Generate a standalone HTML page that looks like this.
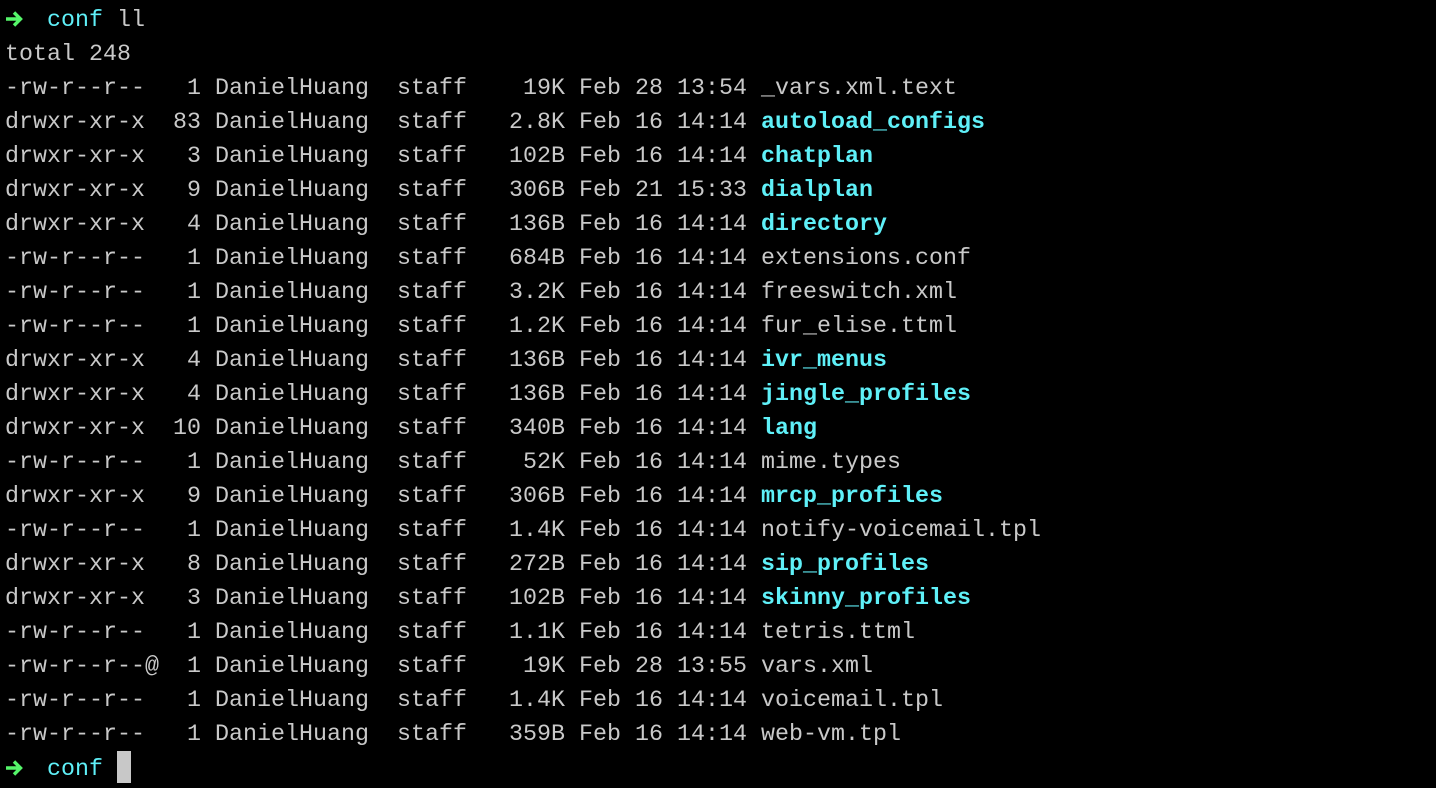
<!DOCTYPE html>
<html><head><meta charset="utf-8"><style>
html,body{margin:0;background:#000;width:1436px;height:788px;overflow:hidden}
pre{margin:0;position:absolute;left:5px;top:3px;font-family:"Liberation Mono",monospace;font-size:23.3px;line-height:34px;color:#c9c9c9;letter-spacing:0.02px}
.c{color:#5ff0f8}
.d{color:#5ff0f8;font-weight:bold}
.cur{display:inline-block;width:14px;height:32px;background:#c8c8c8;vertical-align:-8px}
.ar{display:inline-block;width:18px;height:20px;vertical-align:-3px;margin-right:-4px}
</style></head><body><pre><svg class="ar" viewBox="0 0 18 20"><path d="M1 10H15M9 3.5L15.5 10L9 16.5" stroke="#55f56a" stroke-width="3.4" fill="none"/></svg>  <span class="c">conf</span> ll
total 248
-rw-r--r--   1 DanielHuang  staff    19K Feb 28 13:54 _vars.xml.text
drwxr-xr-x  83 DanielHuang  staff   2.8K Feb 16 14:14 <span class="d">autoload_configs</span>
drwxr-xr-x   3 DanielHuang  staff   102B Feb 16 14:14 <span class="d">chatplan</span>
drwxr-xr-x   9 DanielHuang  staff   306B Feb 21 15:33 <span class="d">dialplan</span>
drwxr-xr-x   4 DanielHuang  staff   136B Feb 16 14:14 <span class="d">directory</span>
-rw-r--r--   1 DanielHuang  staff   684B Feb 16 14:14 extensions.conf
-rw-r--r--   1 DanielHuang  staff   3.2K Feb 16 14:14 freeswitch.xml
-rw-r--r--   1 DanielHuang  staff   1.2K Feb 16 14:14 fur_elise.ttml
drwxr-xr-x   4 DanielHuang  staff   136B Feb 16 14:14 <span class="d">ivr_menus</span>
drwxr-xr-x   4 DanielHuang  staff   136B Feb 16 14:14 <span class="d">jingle_profiles</span>
drwxr-xr-x  10 DanielHuang  staff   340B Feb 16 14:14 <span class="d">lang</span>
-rw-r--r--   1 DanielHuang  staff    52K Feb 16 14:14 mime.types
drwxr-xr-x   9 DanielHuang  staff   306B Feb 16 14:14 <span class="d">mrcp_profiles</span>
-rw-r--r--   1 DanielHuang  staff   1.4K Feb 16 14:14 notify-voicemail.tpl
drwxr-xr-x   8 DanielHuang  staff   272B Feb 16 14:14 <span class="d">sip_profiles</span>
drwxr-xr-x   3 DanielHuang  staff   102B Feb 16 14:14 <span class="d">skinny_profiles</span>
-rw-r--r--   1 DanielHuang  staff   1.1K Feb 16 14:14 tetris.ttml
-rw-r--r--@  1 DanielHuang  staff    19K Feb 28 13:55 vars.xml
-rw-r--r--   1 DanielHuang  staff   1.4K Feb 16 14:14 voicemail.tpl
-rw-r--r--   1 DanielHuang  staff   359B Feb 16 14:14 web-vm.tpl
<svg class="ar" viewBox="0 0 18 20"><path d="M1 10H15M9 3.5L15.5 10L9 16.5" stroke="#55f56a" stroke-width="3.4" fill="none"/></svg>  <span class="c">conf</span> <span class="cur"></span></pre></body></html>
